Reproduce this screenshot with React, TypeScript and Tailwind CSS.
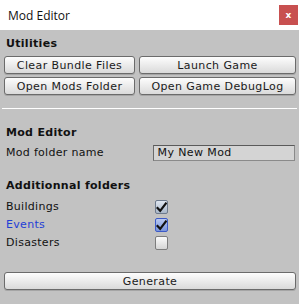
import { ReactNode } from "react"

function UnityButton({ children, className = "" }: { children: ReactNode; className?: string }) {
  return (
    <button
      className={`h-[18px] rounded-[3px] border border-[#6b6b6b] bg-gradient-to-b from-[#fdfdfd] to-[#dadada] text-[11px] leading-none text-[#1a1a1a] tracking-[0.4px] shadow-[0_1px_0_rgba(0,0,0,0.15)] ${className}`}
    >
      {children}
    </button>
  )
}

function CheckBox({ checked, focused }: { checked: boolean; focused?: boolean }) {
  const box = focused
    ? "border-[#3c5ac8] from-[#b8c8f0] to-[#7a95dc]"
    : checked
      ? "border-[#6d7a8c] from-[#dfe6f0] to-[#a9b7c9]"
      : "border-[#7d7d7d] from-[#fbfbfb] to-[#d6d6d6]"
  return (
    <div className={`w-[13px] h-[14px] rounded-[2px] border bg-gradient-to-b ${box} flex items-center justify-center`}>
      {checked && (
        <svg width="11" height="11" viewBox="0 0 11 11">
          <path d="M1.5 6 L4.2 8.8 L9.8 1.5" fill="none" stroke="#111" strokeWidth="2.2" strokeLinecap="square" />
        </svg>
      )}
    </div>
  )
}

export default function App() {
  const folders = [
    { label: "Buildings", checked: true },
    { label: "Events", checked: true, focused: true },
    { label: "Disasters", checked: false },
  ]

  return (
    <div
      className="w-[299px] h-[304px] bg-[#c2c2c2] overflow-hidden text-[11px] text-[#111]"
      style={{ fontFamily: '"DejaVu Sans", Verdana, sans-serif' }}
    >
      {/* Title bar */}
      <div className="h-[30px] bg-white flex justify-between">
        <span
          className="pl-[8px] pt-[7px] text-[12px] text-[#111]"
          style={{ fontFamily: '"Open Sans", "Noto Sans", sans-serif' }}
        >
          Mod Editor
        </span>
        <div className="mt-[5px] mr-[1px] w-[19px] h-[20px] bg-[#c85050] flex items-center justify-center text-white text-[9px] font-bold leading-none">
          x
        </div>
      </div>

      <div className="px-[4px]">
        {/* Utilities */}
        <div className="mt-[7px] h-[14px] leading-[14px] pl-[2px] font-bold tracking-[0.3px]">Utilities</div>
        <div className="mt-[5px] grid grid-cols-[131px_157px] gap-x-[4px] gap-y-[3px]">
          <UnityButton>Clear Bundle Files</UnityButton>
          <UnityButton>Launch Game</UnityButton>
          <UnityButton>Open Mods Folder</UnityButton>
          <UnityButton>Open Game DebugLog</UnityButton>
        </div>
      </div>

      <div className="mt-[13px] mx-[2px] h-[1px] bg-white" />

      <div className="px-[4px]">
        {/* Mod Editor */}
        <div className="mt-[17px] h-[14px] leading-[14px] pl-[2px] font-bold tracking-[0.3px]">Mod Editor</div>
        <div className="mt-[5px] flex items-center h-[16px]">
          <span className="pl-[2px] w-[150px] tracking-[0.3px]">Mod folder name</span>
          <div className="ml-auto w-[142px] h-[16px] bg-[#d4d4d4] border border-[#8a8a8a] border-t-[#5a5a5a] border-l-[#6a6a6a] pl-[3px] leading-[14px] tracking-[0.4px]">
            My New Mod
          </div>
        </div>

        {/* Additionnal folders */}
        <div className="mt-[18px] h-[14px] leading-[14px] pl-[2px] font-bold tracking-[0.3px]">Additionnal folders</div>
        <div className="mt-[5px] flex flex-col">
          {folders.map((f) => (
            <div key={f.label} className="h-[18px] flex items-center">
              <span className={`pl-[2px] w-[151px] tracking-[0.3px] ${f.focused ? "text-[#1f3fd6]" : ""}`}>{f.label}</span>
              <CheckBox checked={f.checked} focused={f.focused} />
            </div>
          ))}
        </div>

        <UnityButton className="mt-[20px] w-[292px]">Generate</UnityButton>
      </div>
    </div>
  )
}
